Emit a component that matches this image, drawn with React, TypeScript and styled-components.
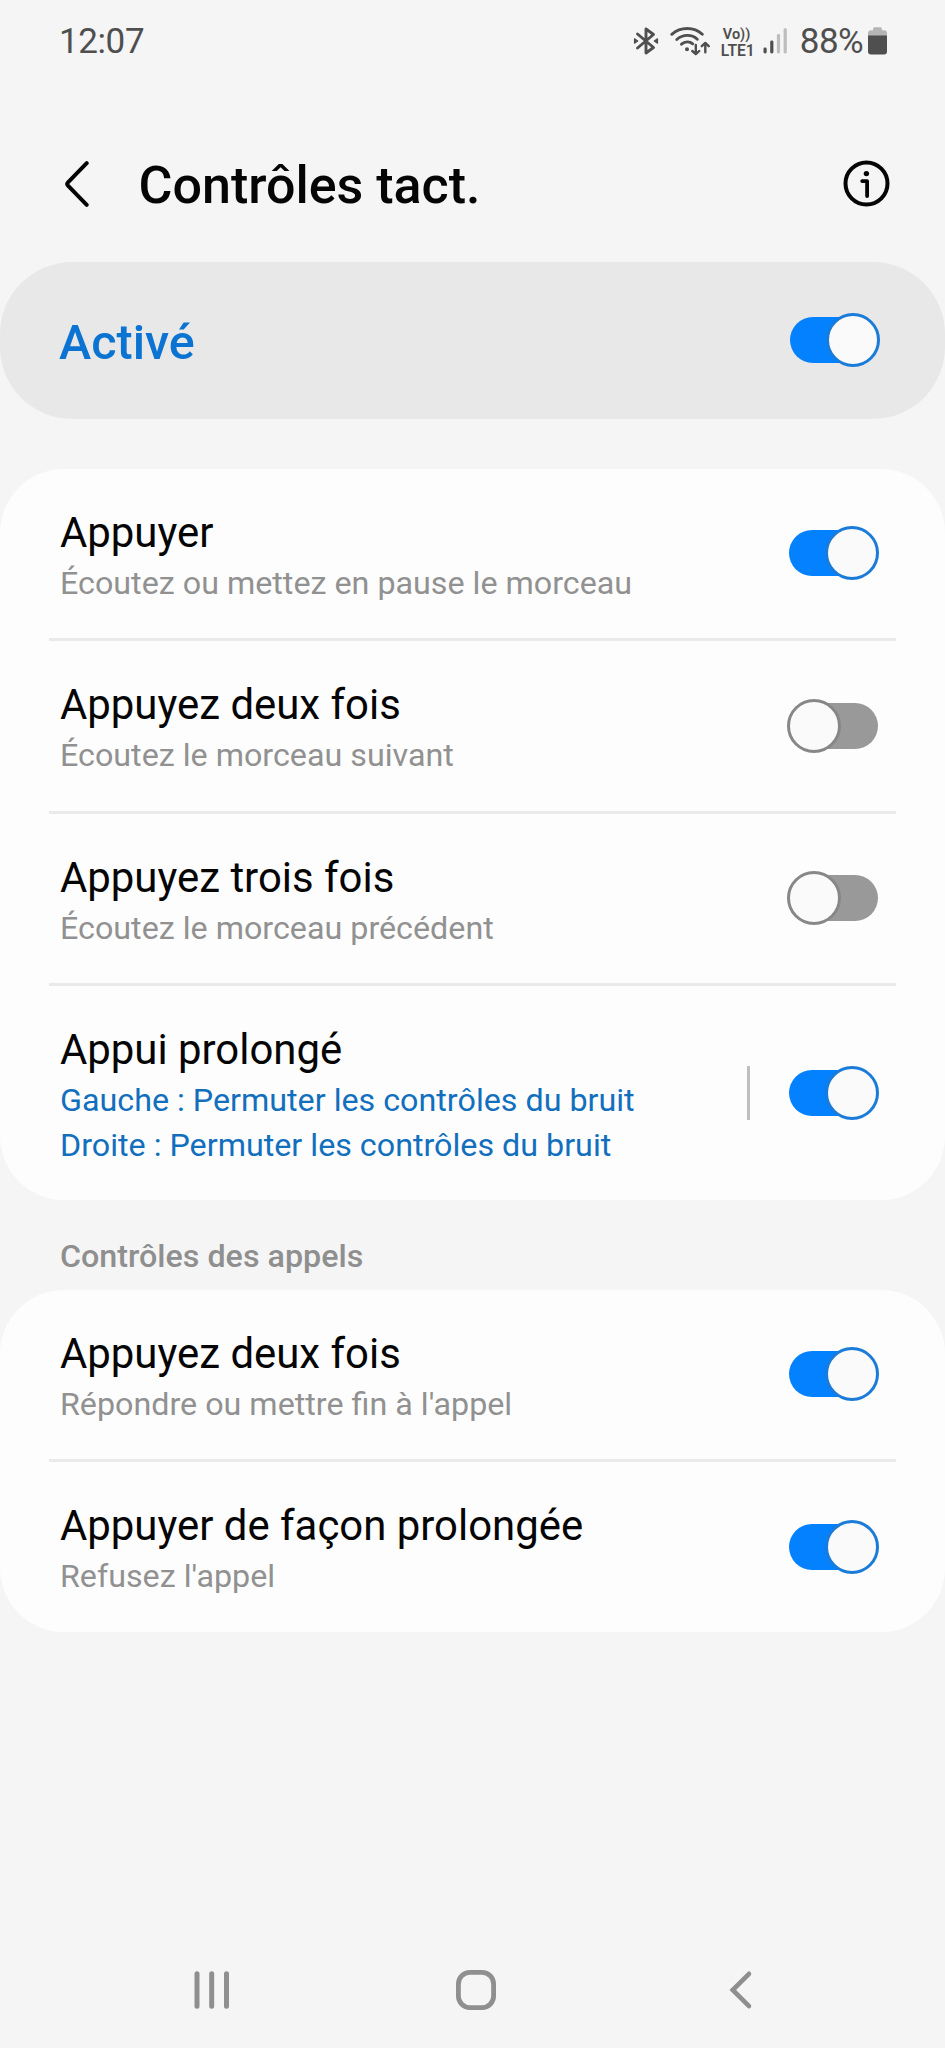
import React, { useState } from 'react';
import styled, { createGlobalStyle } from 'styled-components';

const GlobalStyle = createGlobalStyle`
  * { box-sizing: border-box; }
  body {
    margin: 0;
    background: #f5f5f5;
    font-family: Roboto, "Liberation Sans", sans-serif;
    color: #050505;
  }
  button { border: 0; padding: 0; background: none; font: inherit; color: inherit; }
  svg { display: block; flex: none; }
`;

const Screen = styled.div`
  width: 945px;
  height: 2048px;
  display: flex;
  flex-direction: column;
  background: #f5f5f5;
  overflow: hidden;
`;

const StatusBar = styled.header`
  height: 82px;
  padding: 0 58px 0 59px;
  display: flex;
  justify-content: space-between;
  align-items: center;
  color: #4f4f4f;
`;

const StatusText = styled.span<{ $spacing?: number }>`
  font-size: 35px;
  line-height: 41px;
  letter-spacing: ${(p) => p.$spacing ?? 0}px;
`;

const StatusIcons = styled.div`
  display: flex;
  align-items: center;
`;

const BluetoothSlot = styled.div`
  margin-right: 11px;
`;

const BatteryLevel = styled.div`
  display: flex;
  align-items: center;
  gap: 5px;
  margin-left: 12px;
`;

const Network = styled.div`
  display: flex;
  flex-direction: column;
  width: 36px;
  margin: 3px 6px 0 11px;
  font-weight: 600;
  white-space: nowrap;
`;

const NetworkLine = styled.span<{ $size: number; $indent?: number }>`
  font-size: ${(p) => p.$size}px;
  padding-left: ${(p) => p.$indent ?? 0}px;
  line-height: 16px;
`;

const TitleBar = styled.div`
  height: 179.5px;
  padding: 24px 55px 0 64px;
  display: flex;
  align-items: center;
`;

const Title = styled.h1`
  flex: 1;
  margin: 5px 0 0 48.5px;
  font-size: 52px;
  line-height: 60px;
  font-weight: 500;
`;

const MasterRow = styled.section`
  height: 157.5px;
  padding: 0 66px 0 59px;
  display: flex;
  align-items: center;
  justify-content: space-between;
  border-radius: 72px;
  background: #e8e8e8;
`;

const MasterLabel = styled.span`
  margin-top: 5px;
  font-size: 48.5px;
  line-height: 56px;
  font-weight: 500;
  color: #0b73d1;
`;

const Card = styled.section<{ $top?: number }>`
  margin-top: ${(p) => p.$top ?? 0}px;
  padding: 0 49px;
  border-radius: 64px;
  background: #fdfdfd;
`;

const Row = styled.div<{ $tall?: boolean }>`
  height: ${(p) => (p.$tall ? 213.8 : 169.4)}px;
  padding: 0 18px 0 11px;
  display: flex;
  align-items: center;
`;

const Divider = styled.hr`
  height: 3px;
  margin: 0;
  border: 0;
  background: #eaeaea;
`;

const RowText = styled.div`
  flex: 1;
  align-self: flex-start;
  padding-top: 39px;
  white-space: nowrap;
`;

const RowTitle = styled.div`
  font-size: 41.9px;
  line-height: 50px;
  margin-bottom: 3px;
`;

const RowDetail = styled.div<{ $accent?: boolean }>`
  font-size: 32.25px;
  line-height: 44.8px;
  color: ${(p) => (p.$accent ? '#116fbe' : '#919191')};
`;

const Separator = styled.div`
  width: 3px;
  height: 54px;
  margin-right: 39px;
  background: #bfbfbf;
`;

const SectionHeading = styled.h2`
  height: 90px;
  margin: 0;
  padding: 34px 60px 0;
  font-size: 32.25px;
  line-height: 44px;
  font-weight: 500;
  color: #8f8f8f;
`;

const Track = styled.button<{ $on: boolean }>`
  position: relative;
  flex: none;
  width: 89px;
  height: 46px;
  margin-bottom: 1px;
  border-radius: 23px;
  background: ${(p) => (p.$on ? '#0381fe' : '#999999')};
`;

const Thumb = styled.span<{ $on: boolean }>`
  position: absolute;
  top: -4px;
  left: ${(p) => (p.$on ? 35.5 : -2.5)}px;
  width: 54px;
  height: 54px;
  border-radius: 50%;
  border: 3px solid ${(p) => (p.$on ? '#1a7bd9' : '#878787')};
  background: #fafafa;
`;

const NavBar = styled.nav`
  margin-top: auto;
  height: 116px;
  padding-left: 192px;
  display: flex;
  align-items: center;
  gap: 224px;
`;

function Toggle({ initial }: { initial: boolean }) {
  const [on, setOn] = useState(initial);
  return (
    <Track $on={on} role="switch" aria-checked={on} onClick={() => setOn(!on)}>
      <Thumb $on={on} />
    </Track>
  );
}

type Setting = { title: string; details: string[]; on: boolean; configurable?: boolean };

const touchControls: Setting[] = [
  { title: 'Appuyer', details: ['Écoutez ou mettez en pause le morceau'], on: true },
  { title: 'Appuyez deux fois', details: ['Écoutez le morceau suivant'], on: false },
  { title: 'Appuyez trois fois', details: ['Écoutez le morceau précédent'], on: false },
  {
    title: 'Appui prolongé',
    details: ['Gauche : Permuter les contrôles du bruit', 'Droite : Permuter les contrôles du bruit'],
    on: true,
    configurable: true,
  },
];

const callControls: Setting[] = [
  { title: 'Appuyez deux fois', details: ["Répondre ou mettre fin à l'appel"], on: true },
  { title: 'Appuyer de façon prolongée', details: ["Refusez l'appel"], on: true },
];

function SettingsCard({ items, top }: { items: Setting[]; top?: number }) {
  return (
    <Card $top={top}>
      {items.map((item, i) => (
        <React.Fragment key={item.title}>
          {i > 0 && <Divider />}
          <Row $tall={item.configurable}>
            <RowText>
              <RowTitle>{item.title}</RowTitle>
              {item.details.map((line) => (
                <RowDetail key={line} $accent={item.configurable}>{line}</RowDetail>
              ))}
            </RowText>
            {item.configurable && <Separator />}
            <Toggle initial={item.on} />
          </Row>
        </React.Fragment>
      ))}
    </Card>
  );
}

const BluetoothIcon = () => (
  <svg width="26" height="30" viewBox="0 0 26 30" fill="none" stroke="#4f4f4f" strokeWidth="2.9" strokeLinecap="round" strokeLinejoin="round">
    <path d="M4.5 8 20.5 21.5 13 27V3l7.5 5.5L4.5 22" />
    <path d="M1.5 12.8v4.4l3.2-2.2zM24.5 12.8v4.4l-3.2-2.2z" fill="#4f4f4f" strokeWidth="1.2" />
  </svg>
);

const WifiIcon = () => (
  <svg width="40" height="30" viewBox="0 0 40 30" fill="none" stroke="#4f4f4f" strokeWidth="2.9" strokeLinecap="round" strokeLinejoin="round">
    <path d="M1.8 8.3C10.5.5 24 .5 32.3 8.3" />
    <path d="M6.8 13.5c6-5.4 15-5.4 20.5-.3" />
    <path d="M11.5 18.2c3.5-3 8.2-3 11.2-.4" />
    <circle cx="17" cy="23.3" r="2" fill="#4f4f4f" stroke="none" />
    <path d="M25.8 19v9M22.3 25l3.5 3.2 3.4-3.2M35.3 26.3v-9M31.8 20.2l3.5-3.3 3.4 3.3" strokeWidth="2.4" />
  </svg>
);

const SignalIcon = () => (
  <svg width="25" height="28" viewBox="0 0 25 28" fill="#4f4f4f">
    <rect x="0.5" y="20.5" width="3.2" height="6" rx="1.4" />
    <rect x="7.2" y="13.5" width="3.2" height="13" rx="1.4" />
    <rect x="13.9" y="7" width="3.2" height="19.5" rx="1.4" fill="#bdbdbd" />
    <rect x="20.6" y="1.2" width="3.2" height="25.3" rx="1.4" fill="#bdbdbd" />
  </svg>
);

const BatteryIcon = () => (
  <svg width="19" height="28" viewBox="0 0 19 28">
    <path d="M5 3.2V2Q5 .3 6.7.3h5.6Q14 .3 14 2v1.2h2Q19 3.2 19 6.2V10H0V6.2q0-3 3-3z" fill="#b5b5b5" />
    <path d="M0 8.5h19V24.5q0 3-3 3H3q-3 0-3-3z" fill="#4f4f4f" />
  </svg>
);

export default function App() {
  return (
    <>
      <GlobalStyle />
      <Screen>
        <StatusBar>
          <StatusText $spacing={-0.4}>12:07</StatusText>
          <StatusIcons>
            <BluetoothSlot>
              <BluetoothIcon />
            </BluetoothSlot>
            <WifiIcon />
            <Network>
              <NetworkLine $size={14.5} $indent={2}>Vo))</NetworkLine>
              <NetworkLine $size={15.6}>LTE1</NetworkLine>
            </Network>
            <SignalIcon />
            <BatteryLevel>
              <StatusText $spacing={-0.6}>88%</StatusText>
              <BatteryIcon />
            </BatteryLevel>
          </StatusIcons>
        </StatusBar>

        <TitleBar>
          <svg width="26" height="48" viewBox="0 0 26 48" fill="none" stroke="#050505" strokeWidth="4" strokeLinecap="round" strokeLinejoin="round">
            <path d="M22.7 3.2 4 22.3q-1.6 1.7 0 3.4L22.7 44.8" />
          </svg>
          <Title>Contrôles tact.</Title>
          <svg width="47" height="47" viewBox="0 0 47 47" fill="none" stroke="#050505">
            <circle cx="23.5" cy="23.5" r="21" strokeWidth="4" />
            <circle cx="23.4" cy="13.6" r="2.7" fill="#050505" stroke="none" />
            <path d="M19.2 21.1h4.9v15" strokeWidth="3.8" strokeLinecap="round" strokeLinejoin="round" />
          </svg>
        </TitleBar>

        <MasterRow>
          <MasterLabel>Activé</MasterLabel>
          <Toggle initial />
        </MasterRow>

        <SettingsCard items={touchControls} top={50} />
        <SectionHeading>Contrôles des appels</SectionHeading>
        <SettingsCard items={callControls} />

        <NavBar>
          <svg width="40" height="40" viewBox="0 0 40 40" stroke="#8f8f8f" strokeWidth="5" strokeLinecap="round">
            <path d="M5 3.7v32.6M19.7 3.7v32.6M34.5 3.7v32.6" />
          </svg>
          <svg width="40" height="40" viewBox="0 0 40 40" fill="none" stroke="#8f8f8f" strokeWidth="4.8">
            <rect x="2.4" y="2.4" width="35.2" height="35.2" rx="11.5" />
          </svg>
          <svg width="34" height="40" viewBox="0 0 34 40" fill="none" stroke="#8f8f8f" strokeWidth="4.6" strokeLinecap="round">
            <path d="M29 3.8 12.7 20 29 36.2" />
          </svg>
        </NavBar>
      </Screen>
    </>
  );
}
